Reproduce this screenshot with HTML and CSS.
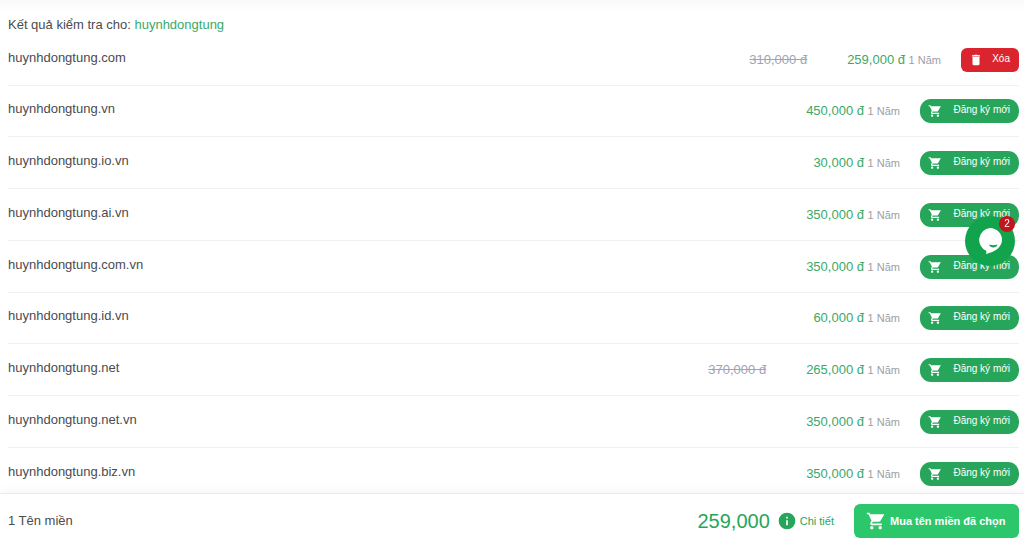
FILE: index.html
```html
<!DOCTYPE html>
<html lang="vi">
<head>
<meta charset="utf-8">
<meta name="viewport" content="width=device-width, initial-scale=1">
<title>Kết quả kiểm tra tên miền</title>
<link rel="stylesheet" href="styles.css">
</head>
<body>
<svg class="sprite" aria-hidden="true">
  <symbol id="cart" viewBox="0 0 24 24"><path d="M7 18c-1.100 0-1.990.9-1.990 2S5.900 22 7 22s2-.9 2-2-.9-2-2-2zM1 2v2h2l3.600 7.590-1.350 2.450c-.16.28-.25.61-.25.960 0 1.100.9 2 2 2h12v-2H7.420c-.14 0-.25-.11-.25-.25l.03-.12.9-1.630h7.450c.75 0 1.410-.41 1.750-1.030L22 4H5.210l-.94-2H1zm16 16c-1.100 0-1.990.9-1.990 2s.89 2 1.990 2 2-.9 2-2-.9-2-2-2z"/></symbol>
  <symbol id="trash" viewBox="0 0 24 24"><path d="M6 19c0 1.100.9 2 2 2h8c1.100 0 2-.9 2-2V7H6v12zM19 4h-3.500l-1-1h-5l-1 1H5v2h14V4z"/></symbol>
  <symbol id="info" viewBox="0 0 24 24"><path d="M12 2a10 10 0 1 0 0 20 10 10 0 0 0 0-20zm1 15h-2v-6h2v6zm0-8h-2V7h2v2z"/></symbol>
</svg>

<main class="results">
  <h1 class="title">Kết quả kiểm tra cho: <span class="keyword">huynhdongtung</span></h1>
  <ul class="list">
    <li class="row"><span class="name">huynhdongtung.com</span><s class="old">310,000 đ</s><span class="price">259,000 đ <small class="term">1 Năm</small></span><button class="btn btn-remove" type="button"><svg class="icon"><use href="#trash"/></svg><span>Xóa</span></button></li>
    <li class="row"><span class="name">huynhdongtung.vn</span><span class="price">450,000 đ <small class="term">1 Năm</small></span><button class="btn" type="button"><svg class="icon"><use href="#cart"/></svg><span>Đăng ký mới</span></button></li>
    <li class="row"><span class="name">huynhdongtung.io.vn</span><span class="price">30,000 đ <small class="term">1 Năm</small></span><button class="btn" type="button"><svg class="icon"><use href="#cart"/></svg><span>Đăng ký mới</span></button></li>
    <li class="row"><span class="name">huynhdongtung.ai.vn</span><span class="price">350,000 đ <small class="term">1 Năm</small></span><button class="btn" type="button"><svg class="icon"><use href="#cart"/></svg><span>Đăng ký mới</span></button></li>
    <li class="row"><span class="name">huynhdongtung.com.vn</span><span class="price">350,000 đ <small class="term">1 Năm</small></span><button class="btn" type="button"><svg class="icon"><use href="#cart"/></svg><span>Đăng ký mới</span></button></li>
    <li class="row"><span class="name">huynhdongtung.id.vn</span><span class="price">60,000 đ <small class="term">1 Năm</small></span><button class="btn" type="button"><svg class="icon"><use href="#cart"/></svg><span>Đăng ký mới</span></button></li>
    <li class="row"><span class="name">huynhdongtung.net</span><s class="old">370,000 đ</s><span class="price">265,000 đ <small class="term">1 Năm</small></span><button class="btn" type="button"><svg class="icon"><use href="#cart"/></svg><span>Đăng ký mới</span></button></li>
    <li class="row"><span class="name">huynhdongtung.net.vn</span><span class="price">350,000 đ <small class="term">1 Năm</small></span><button class="btn" type="button"><svg class="icon"><use href="#cart"/></svg><span>Đăng ký mới</span></button></li>
    <li class="row"><span class="name">huynhdongtung.biz.vn</span><span class="price">350,000 đ <small class="term">1 Năm</small></span><button class="btn" type="button"><svg class="icon"><use href="#cart"/></svg><span>Đăng ký mới</span></button></li>
  </ul>
</main>

<footer class="summary">
  <span class="count">1 Tên miền</span>
  <span class="total">259,000</span>
  <a class="details" href="#chi-tiet"><svg class="info"><use href="#info"/></svg>Chi tiết</a>
  <button class="buy" type="button"><svg class="buy-icon"><use href="#cart"/></svg><span>Mua tên miền đã chọn</span></button>
</footer>

<button class="chat" type="button" aria-label="Trò chuyện">
  <svg class="chat-icon" viewBox="0 0 24 26"><path fill="#fff" d="M12 0a12 12 0 0 1 12 12c0 7-7 12-16 14l.5-3A12 12 0 0 1 12 0z"/><path fill="#12a44d" d="M11 16.500q4 1.500 8.500 0c-1 4-7.500 4-8.500 0z"/></svg>
  <span class="badge">2</span>
</button>
</body>
</html>
```
FILE: styles.css
```css
* {
  box-sizing: border-box;
}

body {
  display: flex;
  flex-direction: column;
  height: 100vh;
  margin: 0;
  background: #fff;
  color: #4b4b4f;
  font: 13px/20px "Liberation Sans", Arial, sans-serif;
}

button {
  border: 0;
  font-family: inherit;
  cursor: pointer;
}

svg {
  flex: none;
  fill: currentColor;
}

.sprite {
  position: absolute;
  width: 0;
  height: 0;
}

.results {
  flex: 1;
  min-height: 0;
  overflow-y: auto;
  scrollbar-width: none;
  padding: 15px 5px 0 8px;
  background: linear-gradient(#f9f9f9, #fff 12px);
}

.title {
  margin: 0;
  font-size: 13px;
  font-weight: 400;
}

.keyword,
.price {
  color: #3aa968;
}

.list {
  margin: 0;
  padding: 0;
  list-style: none;
}

.row {
  display: flex;
  align-items: center;
  height: 52px;
  border-bottom: 1px solid #f1f1f2;
}

.row:first-child,
.row:nth-child(4n + 2) {
  height: 51px;
}

.name {
  flex: 1;
  padding-bottom: 4px;
}

.old {
  margin-right: 40px;
  color: #a2a4b5;
}

.price {
  margin-right: 20px;
}

.term {
  color: #9c9ea8;
  font-size: 11px;
}

.btn {
  display: flex;
  align-items: center;
  justify-content: space-between;
  width: 99px;
  height: 24px;
  padding: 0 9px 2px 8px;
  border-radius: 11px;
  background: #27a65b;
  color: #fff;
  font-size: 10px;
  line-height: 20px;
}

.btn-remove {
  width: 58px;
  border-radius: 6px;
  background: #da252f;
}

.icon {
  width: 14px;
  height: 14px;
  margin-top: 2px;
}

.summary {
  z-index: 1;
  display: flex;
  align-items: center;
  height: 53px;
  padding: 2px 5px 0 8px;
  border-top: 1px solid #e9eaeb;
  background: #fff;
  box-shadow: 0 0 12px rgba(0, 0, 0, 0.06);
}

.count {
  flex: 1;
}

.total {
  margin-right: 7px;
  color: #27a65b;
  font-size: 20px;
}

.details {
  display: flex;
  align-items: center;
  gap: 3px;
  margin-right: 20px;
  color: #27a65b;
  font-size: 11px;
  text-decoration: none;
}

.info {
  width: 20px;
  height: 20px;
}

.buy {
  display: flex;
  align-items: center;
  gap: 4px;
  width: 165px;
  height: 34px;
  padding: 0 12px;
  border-radius: 6px;
  background: #2dc76b;
  color: #fff;
  font-size: 11px;
  font-weight: 700;
}

.buy-icon {
  width: 20px;
  height: 20px;
}

.chat {
  position: fixed;
  right: 9px;
  bottom: 280px;
  z-index: 2;
  display: flex;
  align-items: center;
  justify-content: center;
  width: 50px;
  height: 50px;
  padding: 0;
  border-radius: 50%;
  background: #12a44d;
}

.chat-icon {
  width: 24px;
  height: 26px;
}

.badge {
  position: absolute;
  top: 0;
  right: 0;
  width: 16px;
  border-radius: 50%;
  background: #c4151c;
  color: #fff;
  font-size: 10px;
  line-height: 16px;
  text-align: center;
}
```
